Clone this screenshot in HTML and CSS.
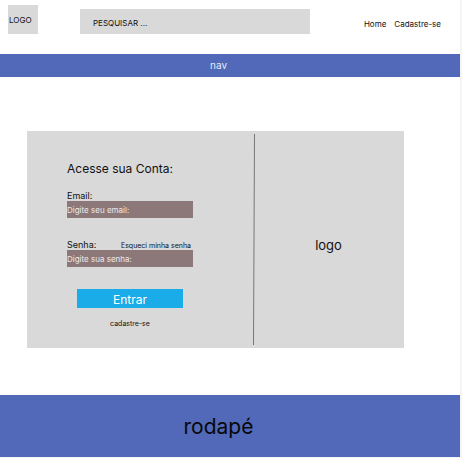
FILE: index.html
```html
<!DOCTYPE html>
<html lang="pt-BR">
<head>
<meta charset="utf-8">
<meta name="viewport" content="width=device-width, initial-scale=1">
<title>Acesse sua Conta</title>
<link rel="stylesheet" href="styles.css">
</head>
<body>
<div class="page">
  <header class="header">
    <a class="brand" href="#">LOGO</a>
    <input class="search" type="search" placeholder="PESQUISAR ..." aria-label="Pesquisar">
    <div class="links">
      <a href="#">Home</a>
      <a href="#">Cadastre-se</a>
    </div>
  </header>
  <nav class="nav">nav</nav>
  <main class="panel">
    <form class="form">
      <h1 class="title">Acesse sua Conta:</h1>
      <div class="field">
        <div class="field-head"><label for="email">Email:</label></div>
        <input class="field-input" id="email" type="email" placeholder="Digite seu email:">
      </div>
      <div class="field">
        <div class="field-head">
          <label for="senha">Senha:</label>
          <a class="forgot" href="#">Esqueci minha senha</a>
        </div>
        <input class="field-input" id="senha" type="password" placeholder="Digite sua senha:">
      </div>
      <button class="submit" type="button">Entrar</button>
      <a class="register" href="#">cadastre-se</a>
    </form>
    <svg class="divider" viewBox="0 0 2 211" preserveAspectRatio="none" aria-hidden="true">
      <path d="M1.5 0L.5 211" stroke="#777" stroke-width="1"/>
    </svg>
    <div class="panel-logo">logo</div>
  </main>
  <footer class="footer">rodapé</footer>
</div>
</body>
</html>
```
FILE: styles.css
```css
* {
  box-sizing: border-box;
}

body {
  margin: 0;
  background: #f5f5f5;
  color: #111;
  font-family: Inter, "Liberation Sans", sans-serif;
  font-size: 8px;
}

a {
  color: inherit;
  text-decoration: none;
}

input,
button {
  border: 0;
  border-radius: 0;
  margin: 0;
  font: inherit;
}

.page {
  margin-right: 2px;
  background: #fff;
}

.header {
  display: flex;
  align-items: flex-start;
  height: 54px;
  padding: 5px 19px 0 8px;
}

.brand {
  width: 30px;
  padding: 1px 0 0 1px;
  background: #d9d9d9;
  line-height: 28px;
}

.search {
  flex: 0 1 230px;
  min-width: 0;
  height: 25px;
  margin: 4px 0 0 42px;
  padding: 2px 13px 0;
  background: #d9d9d9;
  appearance: none;
}

.search::placeholder {
  color: #111;
  opacity: 1;
}

.links {
  display: flex;
  gap: 8px;
  margin: 14px 0 0 auto;
  line-height: 10px;
}

.nav,
.footer {
  padding-right: 23px;
  background: #5169b8;
  text-align: center;
}

.nav {
  color: #e6eaf6;
  font-size: 10px;
  line-height: 23px;
}

.panel {
  display: grid;
  grid-template-columns: 226fr 2px 149fr;
  margin: 54px 56px 47px 27px;
  background: #d9d9d9;
}

.form {
  display: flex;
  flex-direction: column;
  padding: 30px 60px 19px 40px;
}

.title {
  margin: 0 0 14px;
  font-size: 12px;
  font-weight: 400;
  line-height: 16px;
  white-space: nowrap;
}

.field {
  margin-bottom: 22px;
}

.field-head {
  display: flex;
  align-items: flex-end;
  justify-content: space-between;
  padding-right: 2px;
  font-size: 9px;
  line-height: 10px;
}

.forgot {
  font-size: 7px;
  line-height: 8px;
  white-space: nowrap;
}

.field-input {
  display: block;
  width: 100%;
  height: 17px;
  padding: 0;
  background: #8c7878;
  color: #fff;
}

.field-input::placeholder {
  color: #eee8e8;
  opacity: 1;
}

.submit {
  height: 19px;
  margin: 0 10px 11px;
  padding: 2px 0 0;
  background: #1aabe9;
  color: #fff;
  font-size: 12px;
  line-height: 16px;
}

.register {
  align-self: center;
  font-size: 7px;
  line-height: 10px;
}

.divider {
  width: 2px;
  height: 211px;
  align-self: center;
}

.panel-logo {
  align-self: center;
  padding: 10px 2px 0 0;
  text-align: center;
  font-size: 13px;
  line-height: 16px;
}

.footer {
  padding-top: 2px;
  color: #080808;
  font-size: 21px;
  line-height: 60px;
}
```
